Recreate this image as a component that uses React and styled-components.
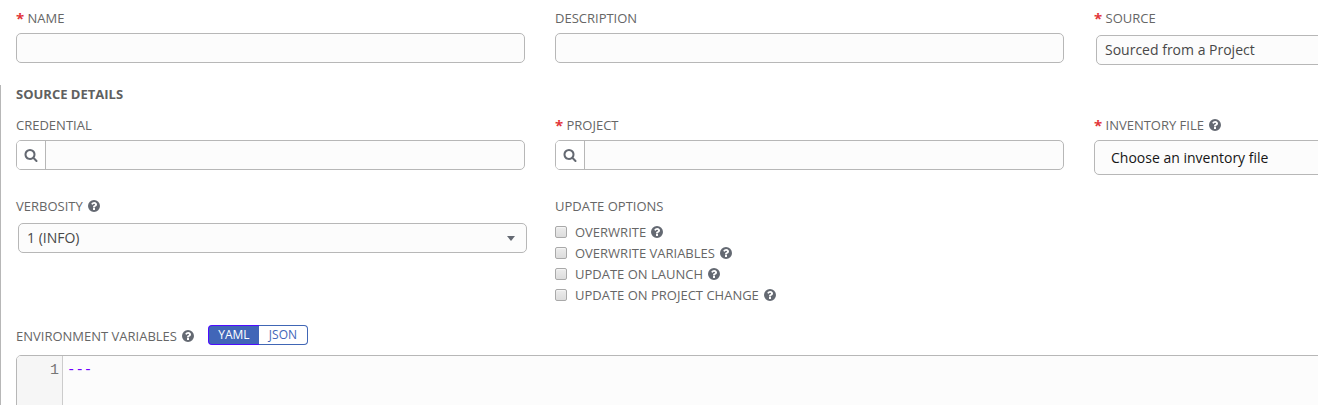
import React from 'react';
import styled, { createGlobalStyle } from 'styled-components';

const GlobalStyle = createGlobalStyle`
  * { box-sizing: border-box; }
  body {
    margin: 0;
    overflow: hidden;
    background: #fff;
    color: #666;
    font: 13px/20px 'Open Sans', 'Noto Sans', sans-serif;
  }
`;

const Form = styled.form`
  height: 405px;
  display: flex;
  flex-direction: column;
  overflow: hidden;
`;

const Row = styled.div`
  display: grid;
  grid-template-columns: repeat(3, 509px);
  column-gap: 30px;
  height: ${(p) => p.$height}px;
`;

const Basics = styled.section`
  height: 85px;
  flex: none;
  padding: 8px 0 0 16px;
`;

const Details = styled.section`
  flex: 1;
  min-height: 0;
  border-left: 1px solid #b7b7b7;
  padding-left: 15px;
`;

const Title = styled.h2`
  margin: 0 0 12px;
  font-size: 13px;
  line-height: 18px;
  font-weight: 700;
  color: #606060;
`;

const Label = styled.div`
  display: flex;
  align-items: center;
  height: 20px;
  margin-bottom: ${(p) => p.$space || 5}px;
  white-space: nowrap;
`;

const Required = styled.span`
  width: 11.5px;
  font-size: 15px;
  font-weight: 700;
  color: #e2353a;
`;

const Input = styled.div`
  height: 30px;
  border: 1px solid #b7b7b7;
  border-radius: 5px;
  background: #fcfcfc;
`;

const Lookup = styled(Input)`
  display: flex;
  overflow: hidden;
`;

const LookupButton = styled.span`
  display: flex;
  align-items: center;
  justify-content: center;
  width: 29px;
  border-right: 1px solid #b7b7b7;
  background: #fff;
  color: #646972;
`;

const Select = styled(Input)`
  display: flex;
  align-items: center;
  justify-content: space-between;
  width: 509px;
  height: ${(p) => p.$height || 30}px;
  margin: ${(p) => p.$offset || '0'};
  padding: 0 11px 0 ${(p) => p.$indent || 8}px;
  font-size: 14px;
  color: ${(p) => p.$color || '#484848'};
`;

const Caret = styled.span`
  border: solid transparent;
  border-width: 5px 4.5px 0;
  border-top-color: #646972;
`;

const Glyph = styled.svg`
  flex: none;
  width: 14px;
  height: 14px;
  margin-left: ${(p) => p.$gap || 0}px;
  fill: #646972;
`;

const Option = styled.label`
  display: flex;
  align-items: center;
  height: 21px;
  white-space: nowrap;
`;

const Check = styled.span`
  width: 12px;
  height: 12px;
  margin-right: 8px;
  border: 1px solid #a9a9a9;
  border-radius: 2px;
  background: linear-gradient(#ececec, #dcdcdc);
  box-shadow: inset 0 1px 1px #f5f5f5;
`;

const Toggle = styled.div`
  display: flex;
  height: 20px;
  margin: 0 0 2px 13px;
`;

const ToggleButton = styled.span`
  width: ${(p) => (p.$active ? 51 : 49)}px;
  border: 1px solid ${(p) => (p.$active ? '#4d0dff' : '#4066b5')};
  border-width: ${(p) => (p.$active ? '1px 0 1px 1px' : '1px 1px 1px 0')};
  border-radius: ${(p) => (p.$active ? '4px 0 0 4px' : '0 4px 4px 0')};
  background: ${(p) => (p.$active ? '#4166b8' : '#fff')};
  color: ${(p) => (p.$active ? '#fff' : '#4166b8')};
  font-size: 12px;
  line-height: 18px;
  text-align: center;
`;

const Editor = styled.div`
  display: flex;
  width: 1587px;
  height: 120px;
  border: 1px solid #b7b7b7;
  border-radius: 5px;
  background: #fcfcfc;
  overflow: hidden;
  font: 15px/27px 'Liberation Mono', monospace;
`;

const Gutter = styled.div`
  width: 46px;
  padding-top: 1px;
  padding-right: 3px;
  border-right: 1px solid #ccc;
  background: #f6f6f6;
  text-align: right;
  color: #767676;
`;

const Code = styled.pre`
  margin: 0;
  padding: 1px 0 0 4px;
  font: inherit;
  font-size: 14px;
  color: #7000ff;
`;

function Help() {
  return (
    <Glyph viewBox="0 0 1792 1792" $gap={4}>
      <path d="M1024 1376v-192q0-14-9-23t-23-9h-192q-14 0-23 9t-9 23v192q0 14 9 23t23 9h192q14 0 23-9t9-23zm256-672q0-88-55.5-163t-138.5-116-170-41q-243 0-371 213-15 24 8 42l132 100q7 6 19 6 16 0 25-12 53-68 86-92 34-24 86-24 48 0 85.5 26t37.5 59q0 38-20 61t-68 45q-63 28-115.5 86.5t-52.5 125.5v36q0 14 9 23t23 9h192q14 0 23-9t9-23q0-19 21.5-49.5t54.5-49.5q32-18 49-28.5t46-35 44.5-48 28-60.5 12.5-81zm384 192a768 768 0 1 1-1536 0a768 768 0 0 1 1536 0z" />
    </Glyph>
  );
}

function SearchIcon() {
  return (
    <Glyph viewBox="0 0 1792 1792">
      <path d="M1216 832q0-185-131.5-316.5t-316.5-131.5-316.5 131.5-131.5 316.5 131.5 316.5 316.5 131.5 316.5-131.5 131.5-316.5zm512 832q0 52-38 90t-90 38q-54 0-90-38l-343-342q-179 124-399 124-143 0-273.5-55.5t-225-150-150-225-55.5-273.5 55.5-273.5 150-225 225-150 273.5-55.5 273.5 55.5 225 150 150 225 55.5 273.5q0 220-124 399l343 343q37 37 37 90z" />
    </Glyph>
  );
}

function Field({ label, required, help, children }) {
  return (
    <div>
      <Label>
        {required && <Required>*</Required>}
        {label}
        {help && <Help />}
      </Label>
      {children}
    </div>
  );
}

function LookupField() {
  return (
    <Lookup>
      <LookupButton>
        <SearchIcon />
      </LookupButton>
    </Lookup>
  );
}

const OPTIONS = ['OVERWRITE', 'OVERWRITE VARIABLES', 'UPDATE ON LAUNCH', 'UPDATE ON PROJECT CHANGE'];

export default function App() {
  return (
    <>
      <GlobalStyle />
      <Form>
        <Basics>
          <Row $height={76}>
            <Field label="NAME" required>
              <Input />
            </Field>
            <Field label="DESCRIPTION">
              <Input />
            </Field>
            <Field label="SOURCE" required>
              <Select $offset="7px 0 0 2px">Sourced from a Project</Select>
            </Field>
          </Row>
        </Basics>
        <Details>
          <Title>SOURCE DETAILS</Title>
          <Row $height={81}>
            <Field label="CREDENTIAL">
              <LookupField />
            </Field>
            <Field label="PROJECT" required>
              <LookupField />
            </Field>
            <Field label="INVENTORY FILE" required help>
              <Select $height={35} $indent={16} $color="#161616">
                Choose an inventory file
              </Select>
            </Field>
          </Row>
          <Row $height={130}>
            <Field label="VERBOSITY" help>
              <Select $offset="7px 0 0 2px">
                1 (INFO)
                <Caret />
              </Select>
            </Field>
            <Field label="UPDATE OPTIONS">
              {OPTIONS.map((option) => (
                <Option key={option}>
                  <Check />
                  {option}
                  <Help />
                </Option>
              ))}
            </Field>
          </Row>
          <Label $space={9}>
            ENVIRONMENT VARIABLES
            <Help />
            <Toggle>
              <ToggleButton $active>YAML</ToggleButton>
              <ToggleButton>JSON</ToggleButton>
            </Toggle>
          </Label>
          <Editor>
            <Gutter>1</Gutter>
            <Code>---</Code>
          </Editor>
        </Details>
      </Form>
    </>
  );
}
